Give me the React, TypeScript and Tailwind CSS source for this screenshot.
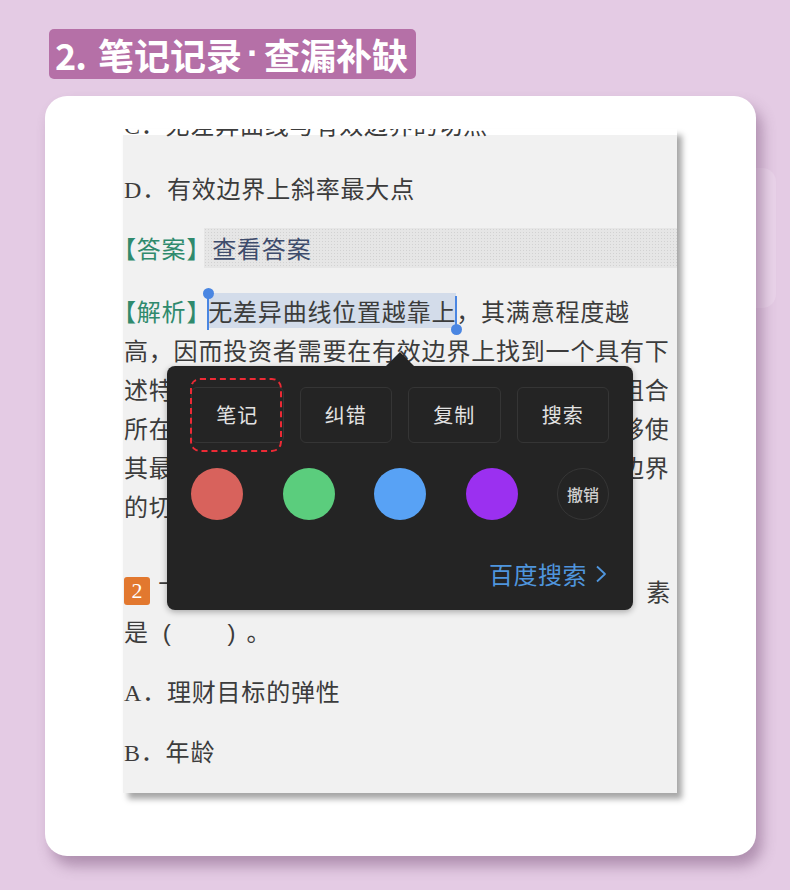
import React from 'react';

const cjk = "font-['Noto_Sans_CJK_SC','Noto_Sans',sans-serif]";

function Half({ children }: { children: React.ReactNode }) {
  return <span className="[font-feature-settings:'halt']">{children}</span>;
}

function Latin({ children }: { children: React.ReactNode }) {
  return <span className="font-['Liberation_Serif',serif]">{children}</span>;
}

function Line({ children, className = '' }: { children: React.ReactNode; className?: string }) {
  return <div className={`whitespace-nowrap h-[39px] leading-[39px] ${className}`}>{children}</div>;
}

function SelectionPopup() {
  const swatches = ['bg-[#d8625c]', 'bg-[#5bcd7d]', 'bg-[#58a2f5]', 'bg-[#9b30f0]'];
  const actions = ['笔记', '纠错', '复制', '搜索'];

  return (
    <div className="absolute left-[44px] top-[237px] w-[466px] h-[244px] rounded-[8px] bg-[#242424] shadow-[0_2px_6px_rgba(0,0,0,0.3)]">
      {/* arrow pointing at the selection */}
      <div className="absolute left-[218px] top-[-14px] w-0 h-0 border-l-[15px] border-r-[15px] border-b-[15px] border-l-transparent border-r-transparent border-b-[#242424]" />

      <div className="grid grid-cols-4 gap-[16px] px-[24px] pt-[21px]">
        {actions.map((a) => (
          <div
            key={a}
            className="h-[56px] rounded-[6px] border border-[#353535] flex items-center justify-center text-[20px] text-[#e2e2e2] tracking-[1px]"
          >
            {a}
          </div>
        ))}
      </div>

      {/* highlight around 笔记 */}
      <div className="absolute left-[23px] top-[12px] w-[92px] h-[74px] rounded-[10px] border-2 border-dashed border-[#ec2a35]" />

      <div className="flex items-center justify-between px-[24px] mt-[25px]">
        {swatches.map((c) => (
          <div key={c} className={`w-[52px] h-[52px] rounded-full ${c}`} />
        ))}
        <div className="w-[52px] h-[52px] rounded-full border border-[#363636] flex items-center justify-center text-[16px] font-medium text-[#d0d0d0]">
          撤销
        </div>
      </div>

      <div className="flex items-center justify-end gap-[8px] pr-[26px] mt-[36px] text-[24px] text-[#4f95dd]">
        <span className="tracking-[0.5px]">百度搜索</span>
        <svg width="12" height="18" viewBox="0 0 12 18" fill="none">
          <path d="M2 1.5 L10 9 L2 16.5" stroke="#4f95dd" strokeWidth="1.8" strokeLinejoin="round" />
        </svg>
      </div>
    </div>
  );
}

function QuestionShot() {
  return (
    <div className="relative ml-[78px] w-[554px] h-[664px] bg-[linear-gradient(to_bottom,#ffffff_6px,#f1f1f1_6px)] shadow-[5px_6px_6px_rgba(0,0,0,0.35)] overflow-hidden">
      <div className="pl-[1px] text-[24px] tracking-[0.8px] text-[#3c3c3c]">
        <div className="h-[40px] leading-[40px] mt-[-25px] whitespace-nowrap">
          <Latin>C</Latin>．无差异曲线与有效边界的切点
        </div>

        <div className="h-[40px] leading-[40px] mt-[24px] whitespace-nowrap">
          <Latin>D</Latin>．有效边界上斜率最大点
        </div>

        <div className="flex h-[40px] mt-[20px] items-center">
          <span className="text-[#2f8a6d] whitespace-nowrap">
            <Half>【</Half>答案<Half>】</Half>
          </span>
          <div className="ml-[5px] flex-1 h-[40px] leading-[40px] pl-[8px] text-[#3e4c6c] bg-[#e6e6e6] bg-[radial-gradient(#d2d2d2_1px,transparent_1px)] bg-[size:3px_3px]">
            查看答案
          </div>
        </div>

        <div className="mt-[23px]">
          <Line>
            <span className="text-[#2f8a6d]">
              <Half>【</Half>解析<Half>】</Half>
            </span>
            <span className="relative ml-[9px] bg-[#d3dcea]">
              <span className="absolute left-[-1px] top-[1px] h-[36px] w-[2px] bg-[#4a86e2]" />
              <span className="absolute left-[-5px] top-[-5px] w-[11px] h-[11px] rounded-full bg-[#4a86e2]" />
              无差异曲线位置越靠上
              <span className="absolute right-[-1px] top-[3px] h-[34px] w-[2px] bg-[#4a86e2]" />
              <span className="absolute right-[-6px] top-[31px] w-[11px] h-[11px] rounded-full bg-[#4a86e2]" />
            </span>
            ，其满意程度越
          </Line>
          <Line>高，因而投资者需要在有效边界上找到一个具有下</Line>
          <Line>述特征的有效组合：相对于其他有效组合，该组合</Line>
          <Line>所在的无差异曲线位置最高，这样的组合便能够使</Line>
          <Line>其最大满意程度得以实现，无差异曲线与有效边界</Line>
          <Line>的切点。</Line>
        </div>

        <div className="mt-[46px]">
          <div className="flex items-center h-[40px] whitespace-nowrap">
            <span className="w-[26px] h-[28px] rounded-[3px] bg-[#e2782f] text-white text-[22px] leading-[28px] text-center font-['Liberation_Serif',serif] tracking-normal">
              2
            </span>
            <span className="ml-[8px]">下列选项中，不属于影响个人理财规划的因</span>
            <span className="ml-[17px]">素</span>
          </div>
          <div className="h-[40px] leading-[40px] whitespace-nowrap">
            是<span className="ml-[14px] font-['Liberation_Sans',sans-serif]">(</span>
            <span className="ml-[56px] font-['Liberation_Sans',sans-serif]">)</span>
            <span className="ml-[10px]">。</span>
          </div>
        </div>

        <div className="h-[40px] leading-[40px] mt-[20px] whitespace-nowrap">
          <Latin>A</Latin>．理财目标的弹性
        </div>
        <div className="h-[40px] leading-[40px] mt-[20px] whitespace-nowrap">
          <Latin>B</Latin>．年龄
        </div>
      </div>

      <SelectionPopup />
    </div>
  );
}

export default function App() {
  return (
    <div className={`relative min-h-[890px] w-[790px] bg-[#e4cbe4] pt-[29px] overflow-hidden ${cjk}`}>
      {/* faint panel peeking out behind the card */}
      <div className="absolute left-[730px] top-[168px] w-[46px] h-[140px] rounded-[14px] bg-[#e9d3e9]" />

      <div className="ml-[49px] inline-flex items-center h-[50px] pl-[6px] pr-[8px] rounded-[5px] bg-[#b570a7] text-white text-[36px] font-bold leading-none">
        <span className="tracking-[-1px]">2.</span>
        <span className="ml-[12px]">笔记记录</span>
        <span className="mx-[5px] font-['Liberation_Sans',sans-serif]">·</span>
        <span>查漏补缺</span>
      </div>

      <div className="relative ml-[45px] mt-[17px] w-[711px] h-[760px] rounded-[22px] bg-white pt-[33px] shadow-[6px_10px_14px_rgba(110,70,110,0.45)]">
        <QuestionShot />
      </div>
    </div>
  );
}
